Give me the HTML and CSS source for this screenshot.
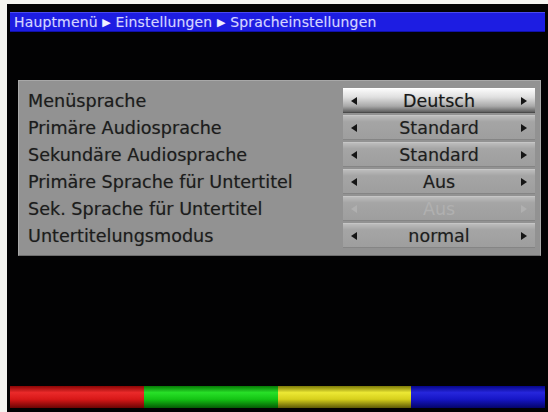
FILE: index.html
```html
<!DOCTYPE html>
<html lang="de">
<head>
  <meta charset="UTF-8">
  <title>Spracheinstellungen</title>
  <link rel="stylesheet" href="styles.css">
</head>
<body>
  <div class="screen">
    <div class="crumbs">Hauptmenü <span class="sep">▶</span> Einstellungen <span class="sep">▶</span> Spracheinstellungen</div>

    <div class="panel">
      <div class="row">
        <div class="label">Menüsprache</div>
        <div class="value active">
          <svg class="arrow" width="6" height="8" viewBox="0 0 6 8"><polygon points="6,0 6,8 0,4"/></svg>
          <span>Deutsch</span>
          <svg class="arrow" width="6" height="8" viewBox="0 0 6 8"><polygon points="0,0 0,8 6,4"/></svg>
        </div>
      </div>
      <div class="row">
        <div class="label">Primäre Audiosprache</div>
        <div class="value">
          <svg class="arrow" width="6" height="8" viewBox="0 0 6 8"><polygon points="6,0 6,8 0,4"/></svg>
          <span>Standard</span>
          <svg class="arrow" width="6" height="8" viewBox="0 0 6 8"><polygon points="0,0 0,8 6,4"/></svg>
        </div>
      </div>
      <div class="row">
        <div class="label">Sekundäre Audiosprache</div>
        <div class="value">
          <svg class="arrow" width="6" height="8" viewBox="0 0 6 8"><polygon points="6,0 6,8 0,4"/></svg>
          <span>Standard</span>
          <svg class="arrow" width="6" height="8" viewBox="0 0 6 8"><polygon points="0,0 0,8 6,4"/></svg>
        </div>
      </div>
      <div class="row">
        <div class="label">Primäre Sprache für Untertitel</div>
        <div class="value">
          <svg class="arrow" width="6" height="8" viewBox="0 0 6 8"><polygon points="6,0 6,8 0,4"/></svg>
          <span>Aus</span>
          <svg class="arrow" width="6" height="8" viewBox="0 0 6 8"><polygon points="0,0 0,8 6,4"/></svg>
        </div>
      </div>
      <div class="row">
        <div class="label">Sek. Sprache für Untertitel</div>
        <div class="value disabled">
          <svg class="arrow" width="6" height="8" viewBox="0 0 6 8"><polygon points="6,0 6,8 0,4"/></svg>
          <span>Aus</span>
          <svg class="arrow" width="6" height="8" viewBox="0 0 6 8"><polygon points="0,0 0,8 6,4"/></svg>
        </div>
      </div>
      <div class="row">
        <div class="label">Untertitelungsmodus</div>
        <div class="value">
          <svg class="arrow" width="6" height="8" viewBox="0 0 6 8"><polygon points="6,0 6,8 0,4"/></svg>
          <span>normal</span>
          <svg class="arrow" width="6" height="8" viewBox="0 0 6 8"><polygon points="0,0 0,8 6,4"/></svg>
        </div>
      </div>
    </div>

    <div class="keys">
      <div class="key red"></div>
      <div class="key green"></div>
      <div class="key yellow"></div>
      <div class="key blue"></div>
    </div>
  </div>
</body>
</html>
```

FILE: styles.css
```css
body {
  margin: 0;
  background: #f4f4f0;
  font-family: "DejaVu Sans", "Liberation Sans", sans-serif;
}
.screen {
  margin: 4px 0 0 7px;
  width: 541px;
  height: 408px;
  background: #020203;
  display: flex;
  flex-direction: column;
  overflow: hidden;
}
.crumbs {
  margin: 8px 3px 0 3px;
  height: 20px;
  box-sizing: border-box;
  background: #1d1de2;
  border-top: 1px solid #4a4af0;
  border-bottom: 1px solid #1010a8;
  color: #d4d4ff;
  font-size: 14px;
  letter-spacing: 0.15px;
  line-height: 18px;
  padding-left: 4px;
  white-space: nowrap;
  text-shadow: 0 0 1px rgba(200, 200, 255, 0.4);
}
.sep {
  font-size: 11px;
  color: #f0f0ff;
  vertical-align: 1px;
}
.panel {
  margin: 48px 7px 0 11px;
  background: #929292;
  border: 1px solid #a8a8a8;
  border-bottom-color: #6e6e6e;
  padding: 7px 5px 7px 9px;
  display: flex;
  flex-direction: column;
  gap: 2px;
}
.row {
  display: grid;
  grid-template-columns: 1fr 192px;
  align-items: center;
  height: 25px;
}
.label {
  font-size: 17.6px;
  color: #1c1c1c;
  white-space: nowrap;
  text-shadow: 0 0 1px rgba(0, 0, 0, 0.35);
}
.value {
  height: 25px;
  box-sizing: border-box;
  display: flex;
  align-items: center;
  justify-content: space-between;
  padding: 0 8px 0 8px;
  background: linear-gradient(#bcbcbc, #a5a5a5 25%, #9e9e9e);
  border-top: 1px solid #c6c6c6;
  border-bottom: 1px solid #858585;
  font-size: 17.5px;
  color: #1e1e1e;
  text-shadow: 0 0 1px rgba(0, 0, 0, 0.3);
}
.value.active {
  background: linear-gradient(#fafafa, #e0e0e0 35%, #a8a8a8 75%, #5e5e5e);
  border-top-color: #ffffff;
  border-bottom-color: #4a4a4a;
  color: #181818;
}
.value.disabled {
  color: #b0b0b0;
  text-shadow: none;
}
.value.disabled .arrow {
  fill: #b0b0b0;
}
.arrow {
  fill: #151515;
  flex: none;
}
.keys {
  margin: auto 3px 4px 3px;
  height: 22px;
  display: flex;
}
.key {
  flex: 1;
}
.red {
  background: linear-gradient(#8a0505, #ea2a2a 30%, #d81818 60%, #6a0404);
}
.green {
  background: linear-gradient(#067a06, #28e028 30%, #14c414 60%, #045a04);
}
.yellow {
  background: linear-gradient(#7c7a08, #ece834 30%, #d6d01c 60%, #5c5806);
}
.blue {
  background: linear-gradient(#06068a, #2626dc 30%, #1616c6 60%, #04046a);
}
```
